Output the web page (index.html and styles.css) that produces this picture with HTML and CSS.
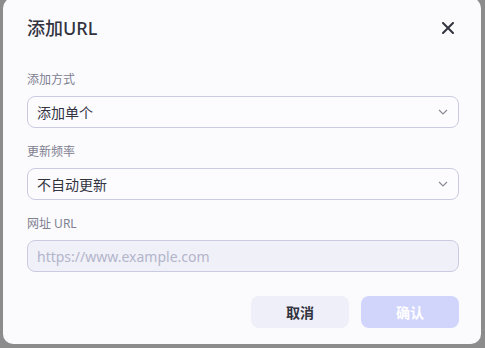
FILE: index.html
```html
<!DOCTYPE html>
<html lang="zh-CN">
<head>
    <meta charset="UTF-8">
    <meta name="viewport" content="width=device-width, initial-scale=1.0">
    <title>添加URL</title>
    <link rel="stylesheet" href="styles.css">
</head>
<body>

<div class="dialog">
    <div class="dialog-head">
        <h1>添加URL</h1>
        <button type="button" class="close-btn" aria-label="关闭">
            <svg width="12" height="12" viewBox="0 0 12 12">
                <path d="M1 1 L11 11 M11 1 L1 11" stroke="#33333f" stroke-width="2" stroke-linecap="round"/>
            </svg>
        </button>
    </div>

    <div class="field">
        <label class="field-label">添加方式</label>
        <div class="select">
            <span>添加单个</span>
            <svg class="chev" width="10" height="6" viewBox="0 0 10 6">
                <path d="M1 1 L5 5 L9 1" fill="none" stroke="#8a8a96" stroke-width="1.2"/>
            </svg>
        </div>
    </div>

    <div class="field">
        <label class="field-label">更新频率</label>
        <div class="select">
            <span>不自动更新</span>
            <svg class="chev" width="10" height="6" viewBox="0 0 10 6">
                <path d="M1 1 L5 5 L9 1" fill="none" stroke="#8a8a96" stroke-width="1.2"/>
            </svg>
        </div>
    </div>

    <div class="field">
        <label class="field-label" for="url">网址 URL</label>
        <input id="url" class="url-input" type="text" placeholder="https://www.example.com" disabled>
    </div>

    <div class="actions">
        <button type="button" class="btn btn-cancel">取消</button>
        <button type="button" class="btn btn-ok">确认</button>
    </div>
</div>

</body>
</html>
```

FILE: styles.css
```css
body {
    margin: 0;
    background-color: #8c8c8c;
    font-family: "Noto Sans", "Noto Sans CJK SC", sans-serif;
    height: 348px;
    overflow: hidden;
}

.dialog {
    margin: -2px 0 0 3px;
    width: 478px;
    box-sizing: border-box;
    padding: 18px 22px 16px 24px;
    background-color: #fbfbfe;
    border-radius: 10px;
}

.dialog-head {
    display: flex;
    align-items: center;
    justify-content: space-between;
    height: 24px;
    margin-bottom: 32px;
}

.dialog-head h1 {
    margin: 0;
    font-size: 18px;
    line-height: 24px;
    font-weight: 500;
    color: #33333f;
}

.close-btn {
    border: none;
    background: transparent;
    padding: 0;
    margin-right: 5px;
    width: 12px;
    height: 12px;
    display: flex;
    cursor: pointer;
}

.field {
    display: flex;
    flex-direction: column;
    margin-bottom: 16px;
}

.field-label {
    font-size: 12px;
    line-height: 16px;
    color: #7f8090;
    margin-bottom: 8px;
}

.select {
    height: 32px;
    box-sizing: border-box;
    border: 1px solid #cacbe0;
    border-radius: 8px;
    background-color: #fcfcff;
    display: flex;
    align-items: center;
    justify-content: space-between;
    padding: 0 10px 0 9px;
    font-size: 14px;
    color: #33333f;
}

.chev {
    display: block;
}

.url-input {
    height: 32px;
    box-sizing: border-box;
    border: 1px solid #cacbe0;
    border-radius: 8px;
    background-color: #f0f0f8;
    padding: 0 9px;
    font-family: inherit;
    font-size: 14px;
}

.url-input::placeholder {
    color: #b3b5cb;
}

.actions {
    display: flex;
    justify-content: flex-end;
    gap: 12px;
    margin-top: 24px;
}

.btn {
    width: 98px;
    height: 32px;
    border: none;
    border-radius: 8px;
    font-family: inherit;
    font-size: 14px;
    font-weight: 700;
}

.btn-cancel {
    background-color: #eeeff8;
    color: #33333f;
}

.btn-ok {
    background-color: #d1d5fc;
    color: #ffffff;
}
```
